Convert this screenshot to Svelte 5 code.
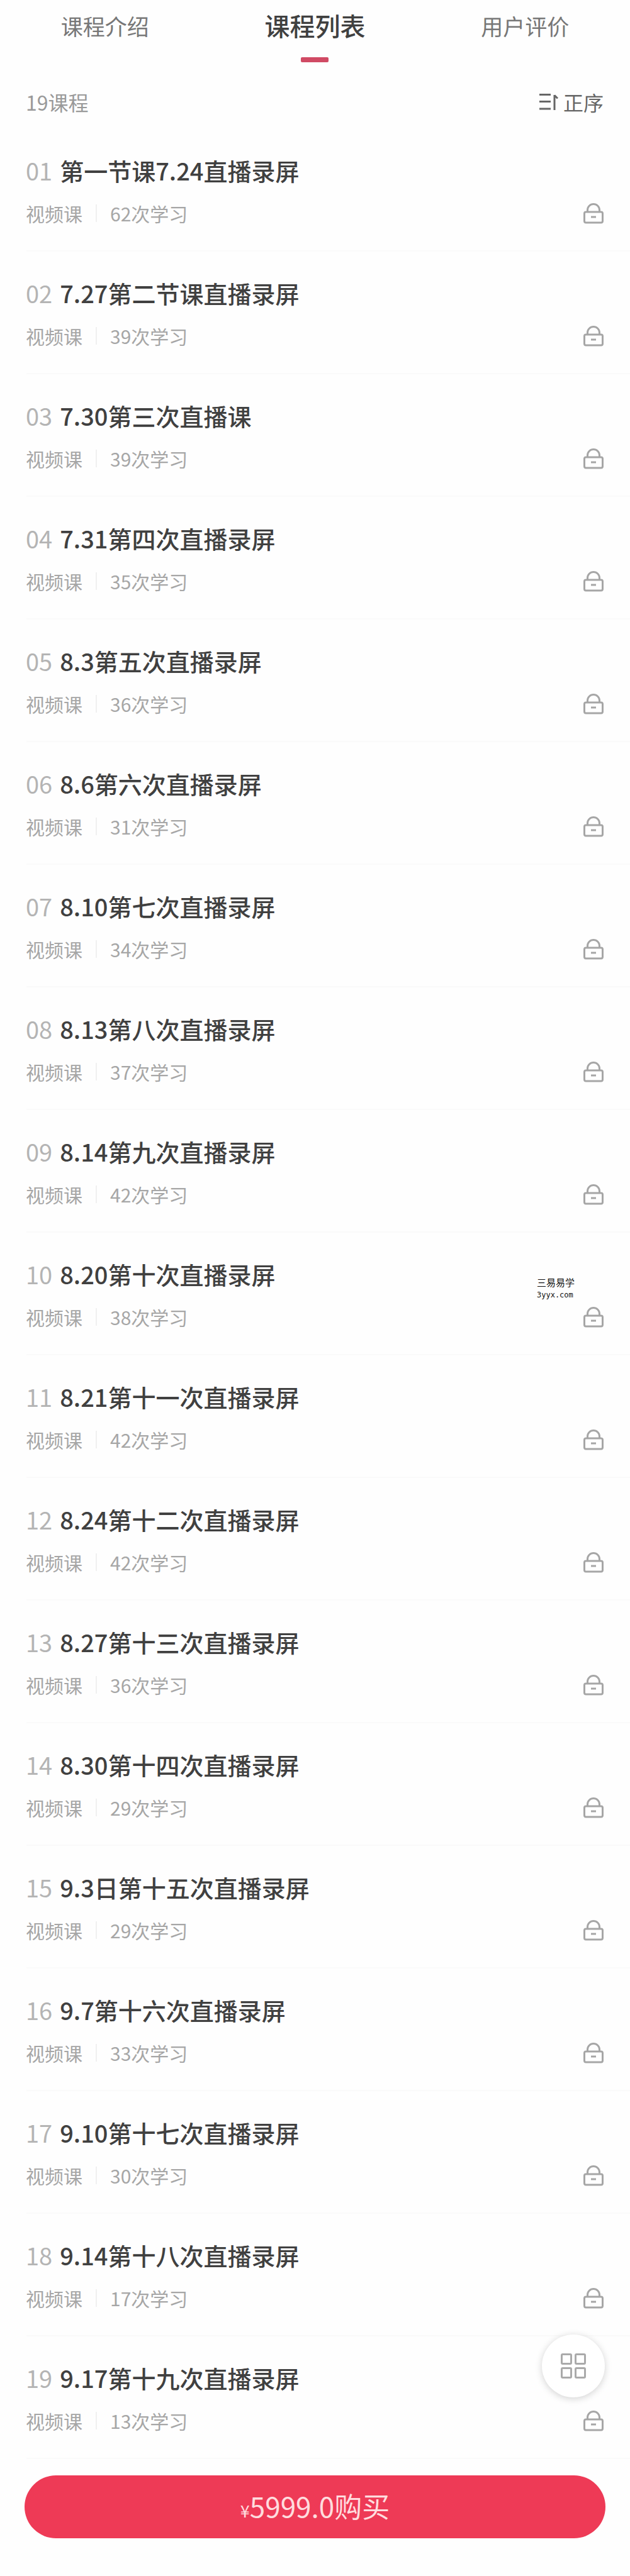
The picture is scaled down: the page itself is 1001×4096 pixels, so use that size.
<script>
  const tabs = ['课程介绍', '课程列表', '用户评价'];
  let active = $state(1);
  let ascending = $state(true);

  const lessons = [
    ['第一节课7.24直播录屏', 62],
    ['7.27第二节课直播录屏', 39],
    ['7.30第三次直播课', 39],
    ['7.31第四次直播录屏', 35],
    ['8.3第五次直播录屏', 36],
    ['8.6第六次直播录屏', 31],
    ['8.10第七次直播录屏', 34],
    ['8.13第八次直播录屏', 37],
    ['8.14第九次直播录屏', 42],
    ['8.20第十次直播录屏', 38],
    ['8.21第十一次直播录屏', 42],
    ['8.24第十二次直播录屏', 42],
    ['8.27第十三次直播录屏', 36],
    ['8.30第十四次直播录屏', 29],
    ['9.3日第十五次直播录屏', 29],
    ['9.7第十六次直播录屏', 33],
    ['9.10第十七次直播录屏', 30],
    ['9.14第十八次直播录屏', 17],
    ['9.17第十九次直播录屏', 13]
  ].map(([title, count], i) => ({ no: String(i + 1).padStart(2, '0'), title, count }));

  let shown = $derived(ascending ? lessons : [...lessons].reverse());
</script>

<div class="page">
  <nav class="tabs">
    {#each tabs as tab, i}
      <button class="tab" class:active={active === i} onclick={() => (active = i)}>
        <span class="label">{tab}</span>
        <span class="bar"></span>
      </button>
    {/each}
  </nav>

  <div class="summary">
    <span>{lessons.length}课程</span>
    <button class="sort" onclick={() => (ascending = !ascending)}>
      <svg width="30" height="28" viewBox="0 0 30 28" fill="none" stroke="currentColor" stroke-width="3" aria-hidden="true">
        <path d="M0 2.5h18M0 13.5h18M0 25h18M24 27V3M24 3.5l5 5" />
      </svg>
      {ascending ? '正序' : '倒序'}
    </button>
  </div>

  <ul class="list">
    {#each shown as lesson (lesson.no)}
      <li class="row">
        <a class="title" href="#lesson-{lesson.no}"><span class="no">{lesson.no}</span>{lesson.title}</a>
        <div class="meta">
          <span>视频课</span>
          <i class="sep"></i>
          <span>{lesson.count}次学习</span>
          <svg class="lock" width="32" height="34" viewBox="0 0 32 34" fill="none" stroke="currentColor" stroke-width="3" aria-label="未解锁" role="img">
            <rect x="1.5" y="15" width="29" height="17" rx="2.5" />
            <path d="M6.5 15v-3a9.5 9.5 0 0 1 19 0v3M12 23h8" />
          </svg>
        </div>
        {#if lesson.no === '10'}
          <div class="stamp"><span class="stamp-name">三易易学</span><span class="stamp-site">3yyx.com</span></div>
        {/if}
      </li>
    {/each}
  </ul>

  <footer class="footer">
    <button class="fab" aria-label="更多">
      <svg width="40" height="40" viewBox="0 0 40 40" fill="none" stroke="currentColor" stroke-width="3" aria-hidden="true">
        <rect x="1.5" y="1.5" width="15" height="15" rx="1.5" />
        <rect x="23.5" y="1.5" width="15" height="15" rx="1.5" />
        <rect x="1.5" y="23.5" width="15" height="15" rx="1.5" />
        <rect x="23.5" y="23.5" width="15" height="15" rx="1.5" />
      </svg>
    </button>
    <button class="buy"><span class="yen">¥</span>5999.0购买</button>
  </footer>
</div>

<style>
  :global(body) {
    background: #fefefe;
  }
  .page {
    font-family: 'Noto Sans CJK SC', sans-serif;
    color: #404040;
  }
  button {
    border: 0;
    padding: 0;
    background: none;
    font: inherit;
    color: inherit;
    cursor: pointer;
  }
  .tabs {
    display: grid;
    grid-template-columns: repeat(3, 1fr);
    padding-bottom: 20px;
  }
  .tab {
    display: flex;
    flex-direction: column;
    align-items: center;
    gap: 10px;
    font-size: 35px;
    line-height: 81px;
    color: #777;
  }
  .tab.active {
    font-size: 40px;
    font-weight: 500;
    color: #404040;
  }
  .bar {
    width: 44px;
    height: 8px;
    border-radius: 2px;
  }
  .active .bar {
    background: #d04a64;
  }
  .summary {
    display: flex;
    justify-content: space-between;
    align-items: center;
    height: 86px;
    padding: 0 42px 0 41px;
    font-size: 32px;
    color: #999;
  }
  .sort {
    display: flex;
    align-items: center;
    gap: 8px;
    color: #666;
  }
  .list {
    margin: 0;
    padding: 0;
    list-style: none;
  }
  .row {
    position: relative;
    box-sizing: border-box;
    height: 195px;
    padding: 36px 42px 0 41px;
  }
  .row::after {
    content: '';
    position: absolute;
    left: 42px;
    right: 0;
    bottom: 0;
    height: 2px;
    background: #fafafa;
  }
  .title {
    display: block;
    font-size: 38px;
    font-weight: 500;
    line-height: 60px;
    color: #404040;
    text-decoration: none;
  }
  .no {
    margin-right: 12px;
    font-weight: 400;
    color: #b4b4b4;
  }
  .meta {
    display: flex;
    align-items: center;
    margin-top: 13px;
    font-size: 30px;
    line-height: 50px;
    color: #a6a6a6;
  }
  .sep {
    width: 2px;
    height: 28px;
    margin: 0 21px;
    background: #f0f0f0;
  }
  .lock {
    margin-left: auto;
    color: #a6a6a6;
  }
  .stamp {
    position: absolute;
    top: 69px;
    right: 88px;
    display: flex;
    flex-direction: column;
    line-height: 20px;
    color: #111;
  }
  .stamp-name {
    font-size: 15px;
  }
  .stamp-site {
    font-family: 'DejaVu Sans Mono', monospace;
    font-size: 12px;
  }
  .footer {
    position: relative;
    padding: 26px 39px 59px;
  }
  .buy {
    display: block;
    width: 100%;
    height: 100px;
    border-radius: 50px;
    background: #ee3a56;
    font-size: 44px;
    line-height: 96px;
    color: #ffdcde;
  }
  .yen {
    font-size: 27px;
  }
  .fab {
    position: absolute;
    right: 40px;
    bottom: calc(100% + 98px);
    display: flex;
    align-items: center;
    justify-content: center;
    width: 100px;
    height: 100px;
    border-radius: 50%;
    background: #fff;
    box-shadow: 0 2px 12px rgba(0, 0, 0, 0.18);
    color: #aaa;
  }
</style>
